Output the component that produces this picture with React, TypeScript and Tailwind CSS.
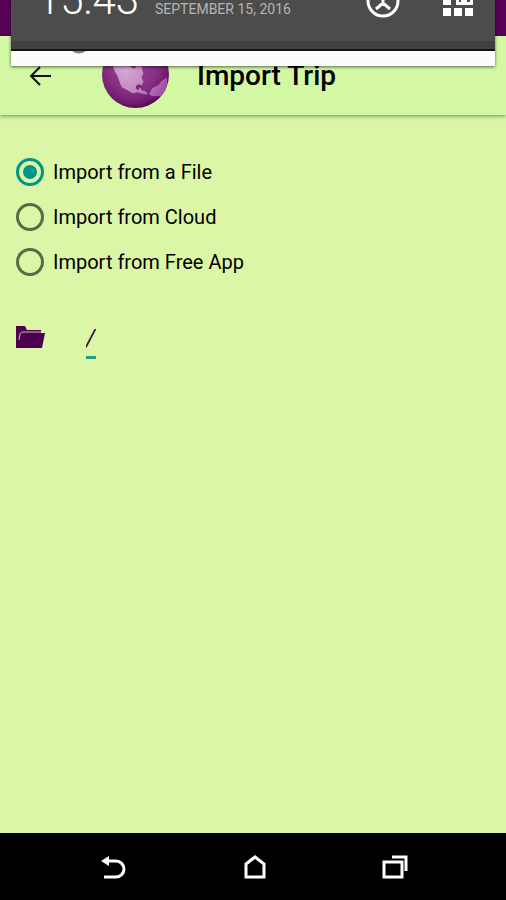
import { useState } from "react";

const sources = [
  { id: "file", label: "Import from a File" },
  { id: "cloud", label: "Import from Cloud" },
  { id: "free", label: "Import from Free App" },
];

function Globe() {
  return (
    <svg viewBox="0 0 68 68" className="mb-[2px] size-[67px]" aria-hidden="true">
      <defs>
        <radialGradient id="sea" cx="0.45" cy="0.4" r="0.6">
          <stop offset="0" stopColor="#9a3f98" />
          <stop offset="0.6" stopColor="#863083" />
          <stop offset="0.88" stopColor="#721a70" />
          <stop offset="1" stopColor="#560a56" />
        </radialGradient>
        <radialGradient id="land" gradientUnits="userSpaceOnUse" cx="24" cy="30" r="42">
          <stop offset="0" stopColor="#d6a6d4" />
          <stop offset="0.6" stopColor="#bf84be" />
          <stop offset="1" stopColor="#a553a5" />
        </radialGradient>
      </defs>
      <circle cx="34" cy="34" r="34" fill="url(#sea)" />
      <g fill="url(#land)">
        <path d="M10 20 L18 12 L36 10 L42 20 L40 26 L42 33 L40 37 L42 41 L40 46 L40 50 L44 51 L47 54 L43 54 L36 52 L31 53 L26 50 L20 47 L18 42 L16 36 L13 31 L11 25 Z" />
        <path d="M48 53 L51 48 L57 45 L61 40 L66 37 L66 44 L64 51 L60 56 L53 56 L49 55 Z" />
      </g>
      <path d="M26 23 L30 27 L34 28 L34 24 L38 26 L36 23 Z" fill="#842d82" />
      <path d="M34 48 L35 45 L38 44 L41 46 L40 49 L38 47 L37 50 Z" fill="#7a2278" />
    </svg>
  );
}

function NotificationShade() {
  return (
    <div className="absolute inset-x-[11px] top-0 z-10 overflow-hidden shadow-[0_1px_3px_rgba(0,0,0,0.6)]">
      <div className="flex h-[41px] items-start bg-[#4c4c4c] pr-[22px] pl-[26px]">
        <time className="-mt-[24px] text-[42px] leading-[48px] font-light text-white">15:43</time>
        <span className="ml-4 flex-1 text-[14px] leading-[18px] whitespace-nowrap text-[#b5b5b5]">
          SEPTEMBER 15, 2016
        </span>
        <button aria-label="Clear notifications" className="-mt-4 mr-[43px]">
          <svg viewBox="0 0 34 34" className="size-[34px]" fill="none" stroke="#fff" strokeWidth="3">
            <circle cx="17" cy="17" r="15" />
            <path d="M10 9 L17 15 L24 9 M17 15 V20 M10 25 L17 19 L24 25" />
          </svg>
        </button>
        <button aria-label="Quick settings" className="-mt-[14px]">
          <svg viewBox="0 0 30 30" className="size-[30px]" fill="#fff">
            <path d="M0 0H8V8H0Z M11 0H19V8H11Z M22 0H30V8H22Z M0 11H8V19H0Z M0 22H8V30H0Z M11 22H19V30H11Z M22 22H30V30H22Z" />
            <path d="M13 9H30V19H13Z" />
            <path d="M16 9H27V16H16Z" fill="#4c4c4c" />
            <path d="M18 11L21 14L24 11V16H18Z" />
          </svg>
        </button>
      </div>
      <div className="h-[10px] border-b-2 border-[#151515] bg-[#414141]" />
      <div className="h-[15px] bg-[#fcfcfc] pl-[61px]">
        <svg viewBox="0 0 14 3" className="h-[3px] w-[14px]" aria-hidden="true">
          <path d="M0 0 H14 Q7 5 0 0 Z" fill="#858585" />
        </svg>
      </div>
    </div>
  );
}

export default function App() {
  const [source, setSource] = useState("file");
  const [path, setPath] = useState("/");

  return (
    <div className="relative flex min-h-screen flex-col bg-[#daf6a6] font-[Roboto,sans-serif] text-black">
      <NotificationShade />

      {/* Status bar */}
      <div className="h-9 bg-[#560058]" />

      {/* Toolbar */}
      <header className="flex h-[79px] items-center bg-[#d2f8a4] pl-7 shadow-[0_1px_4px_rgba(0,0,0,0.45)]">
        <button aria-label="Back" className="mr-[49px]">
          <svg viewBox="0 0 25 24" className="h-6 w-[25px]" fill="none" stroke="#111" strokeWidth="2">
            <path d="M23 12 H3 M12 3 L3 12 L12 21" />
          </svg>
        </button>
        <Globe />
        <h1 className="ml-7 text-[28px] leading-8 font-medium">Import Trip</h1>
      </header>

      <main className="flex-1 px-4 pt-[34px]">
        <div role="radiogroup" aria-label="Import source">
          {sources.map((s) => (
            <label key={s.id} htmlFor={s.id} className="flex h-[45px] items-center gap-[9px] text-[20px] leading-6">
              <input
                type="radio"
                id={s.id}
                name="source"
                checked={source === s.id}
                onChange={() => setSource(s.id)}
                className="size-7 appearance-none rounded-full border-[3px] border-[#586b48] bg-clip-content p-1 checked:border-[#009688] checked:bg-[#009688]"
              />
              {s.label}
            </label>
          ))}
        </div>

        <div className="mt-[39px] flex items-start">
          <button aria-label="Choose folder" className="mt-[2px] mr-10">
            <svg viewBox="0 0 30 24" className="h-6 w-[30px]">
              <path d="M0 1 H9 L11 5 H25 V8 H5 L2 14 V23 H0 Z" fill="#4e0050" />
              <path d="M4 8 H29 L26 23 H0 V12 Z" fill="#4e0050" />
              <path d="M3 15 L4 9 Q5 7 7 7 H25" fill="none" stroke="#c9c0a4" strokeWidth="1" />
            </svg>
          </button>
          <input
            type="text"
            aria-label="Folder path"
            value={path}
            onChange={(e) => setPath(e.target.value)}
            className="h-[36px] w-[10px] border-b-[3px] border-[#239b80] pb-[2px] text-[23px] leading-7 text-[#300832] italic outline-none"
          />
        </div>
      </main>

      {/* System navigation */}
      <nav className="flex h-[67px] items-center justify-between bg-black pr-[98px] pl-[101px]">
        <button aria-label="Back">
          <svg viewBox="0 0 26 24" className="h-6 w-[26px]" fill="none" stroke="#fff" strokeWidth="3">
            <path d="M7 6 H15 A8 8 0 0 1 15 22 H3" />
            <path d="M0 6 L8 1 V11 Z" fill="#fff" stroke="none" />
          </svg>
        </button>
        <button aria-label="Home">
          <svg viewBox="0 0 22 24" className="h-6 w-[22px]" fill="none" stroke="#fff" strokeWidth="3">
            <path d="M2 9 L11 2 L20 9 V22 H2 Z" />
          </svg>
        </button>
        <button aria-label="Recent apps">
          <svg viewBox="0 0 26 24" className="h-6 w-[26px]" fill="none" stroke="#fff" strokeWidth="3">
            <path d="M2 7 H20 V22 H2 Z" />
            <path d="M10 2 H24 V16" />
          </svg>
        </button>
      </nav>
    </div>
  );
}
